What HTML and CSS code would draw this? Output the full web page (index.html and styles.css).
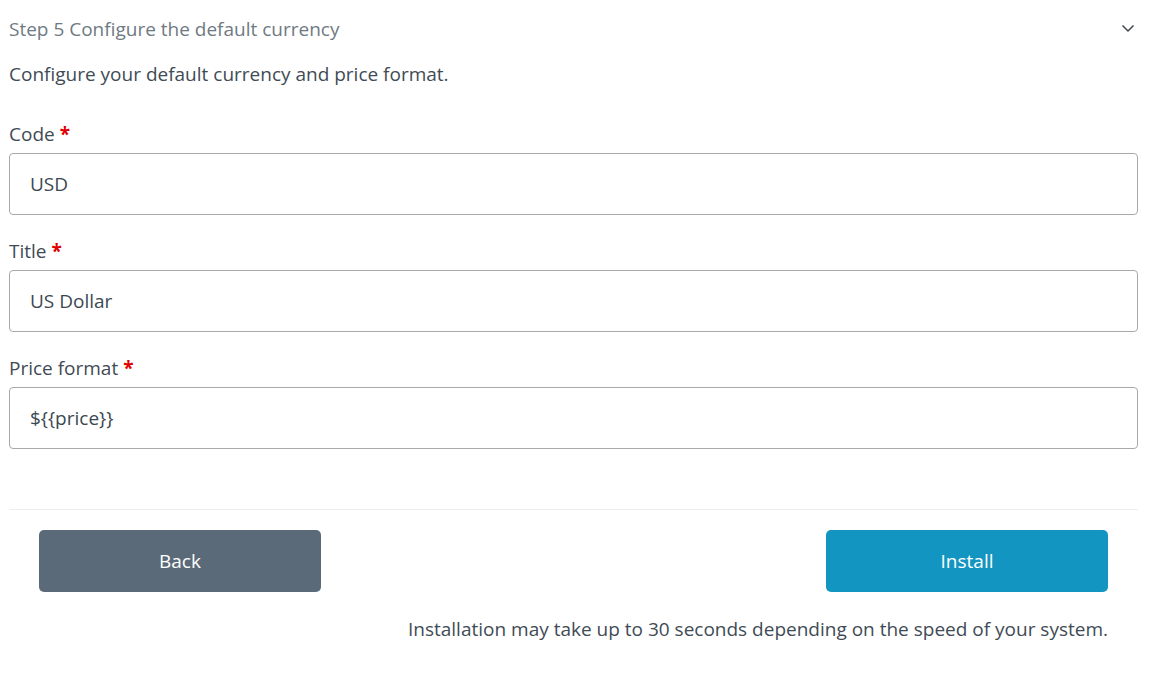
FILE: index.html
```html
<!DOCTYPE html>
<html>
<head>
<meta charset="utf-8">
<link rel="stylesheet" href="styles.css">
</head>
<body>
<div class="page">
  <div class="step-head">
    <span class="step-title">Step 5 Configure the default currency</span>
    <svg class="chev" width="14" height="14" viewBox="0 0 14 14"><path d="M1.5 4.5 L7 10 L12.5 4.5" fill="none" stroke="#3d4750" stroke-width="1.5"/></svg>
  </div>
  <p class="desc">Configure your default currency and price format.</p>
  <div class="fields">
    <div class="field">
      <label class="label">Code <span class="req">*</span></label>
      <div class="input">USD</div>
    </div>
    <div class="field">
      <label class="label">Title <span class="req">*</span></label>
      <div class="input">US Dollar</div>
    </div>
    <div class="field">
      <label class="label">Price format <span class="req">*</span></label>
      <div class="input">${{price}}</div>
    </div>
  </div>
  <div class="divider"></div>
  <div class="actions">
    <button class="btn btn-back">Back</button>
    <button class="btn btn-install">Install</button>
  </div>
  <p class="note">Installation may take up to 30 seconds depending on the speed of your system.</p>
</div>
</body>
</html>
```
FILE: styles.css
```css
html, body {
  margin: 0;
  padding: 0;
  background: #ffffff;
}
body {
  font-family: "Open Sans", "Noto Sans", sans-serif;
  font-size: 19px;
  color: #3f4b55;
}
.page {
  width: 1129px;
  padding: 0 0 0 9px;
}
.step-head {
  display: flex;
  align-items: center;
  justify-content: space-between;
  height: 58px;
}
.step-title {
  color: #6f7a83;
}
.chev {
  display: block;
  margin-right: 3px;
  margin-top: -3px;
}
.desc {
  margin: 0;
  line-height: 32px;
}
.fields {
  display: flex;
  flex-direction: column;
  gap: 23px;
  margin-top: 31px;
}
.label {
  display: block;
  line-height: 26px;
  margin-bottom: 6px;
}
.req {
  color: #e00000;
  font-weight: bold;
}
.input {
  box-sizing: border-box;
  height: 62px;
  border: 1px solid #a9a9a9;
  border-radius: 4px;
  padding: 0 20px;
  display: flex;
  align-items: center;
  color: #3b4852;
}
.divider {
  margin-top: 60px;
  height: 1px;
  background: #ebedef;
}
.actions {
  display: flex;
  justify-content: space-between;
  padding: 0 30px;
  margin-top: 20px;
}
.btn {
  width: 282px;
  height: 62px;
  border: none;
  border-radius: 5px;
  color: #ffffff;
  font-family: inherit;
  font-size: 19px;
}
.btn-back {
  background: #5a6a78;
}
.btn-install {
  background: #1295c1;
}
.note {
  margin: 24px 30px 0 0;
  text-align: right;
  line-height: 26px;
}
```
